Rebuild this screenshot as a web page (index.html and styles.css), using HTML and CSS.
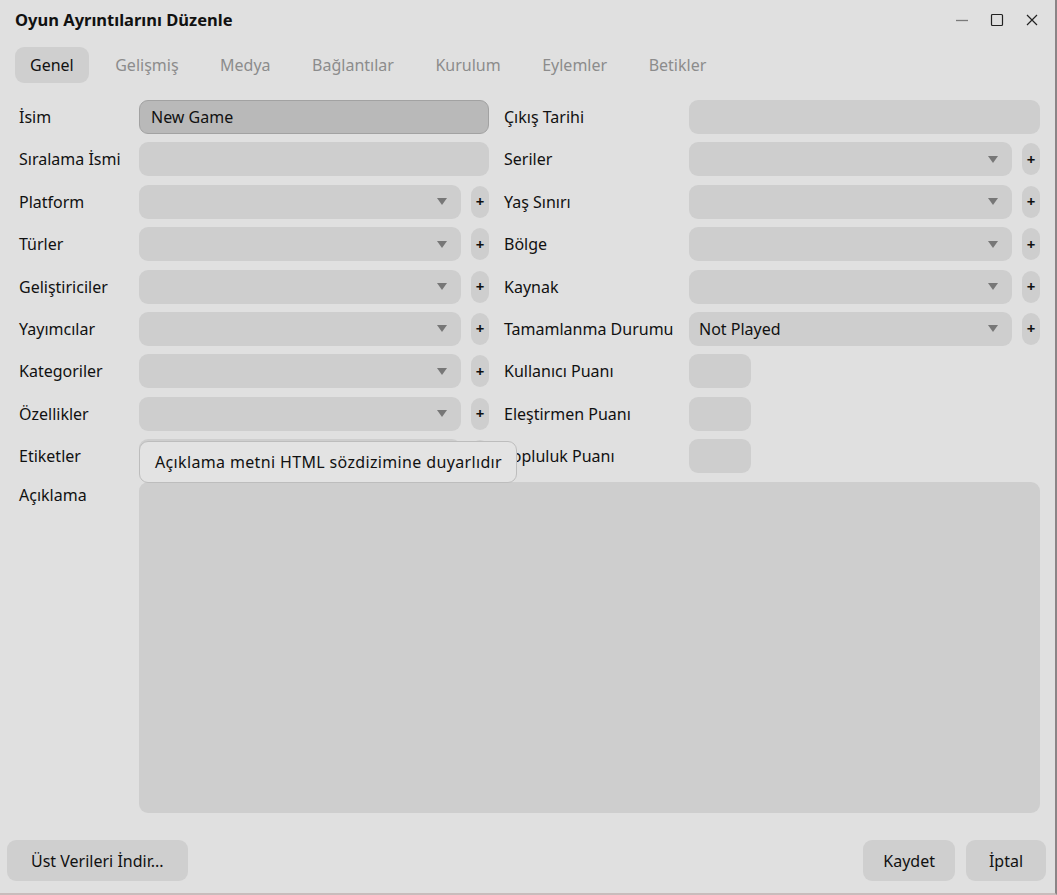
FILE: index.html
```html
<!DOCTYPE html>
<html lang="tr">
<head>
<meta charset="utf-8">
<title>Oyun Ayrıntılarını Düzenle</title>
<link rel="stylesheet" href="styles.css">
</head>
<body>
<div class="window">
  <header class="titlebar">
    <div class="title">Oyun Ayrıntılarını Düzenle</div>
    <div class="controls">
      <svg class="ctl" width="14" height="14" viewBox="0 0 14 14"><line x1="1" y1="7.5" x2="13" y2="7.5" stroke="#7a7a7a" stroke-width="1.3"/></svg>
      <svg class="ctl" width="14" height="14" viewBox="0 0 14 14"><rect x="1.5" y="1.5" width="11" height="11" rx="1" fill="none" stroke="#222" stroke-width="1.2"/></svg>
      <svg class="ctl" width="14" height="14" viewBox="0 0 14 14"><path d="M2 2 L12 12 M12 2 L2 12" stroke="#222" stroke-width="1.2"/></svg>
    </div>
  </header>

  <nav class="tabs">
    <span class="tab active">Genel</span>
    <span class="tab">Gelişmiş</span>
    <span class="tab">Medya</span>
    <span class="tab">Bağlantılar</span>
    <span class="tab">Kurulum</span>
    <span class="tab">Eylemler</span>
    <span class="tab">Betikler</span>
  </nav>

  <main class="form">
    <label class="lbl">İsim</label>
    <div class="field focused">New Game</div>
    <label class="lbl r">Çıkış Tarihi</label>
    <div class="field"></div>

    <label class="lbl">Sıralama İsmi</label>
    <div class="field"></div>
    <label class="lbl r">Seriler</label>
    <div class="combo-row"><div class="field combo"><span class="arrow"></span></div><span class="plus">+</span></div>

    <label class="lbl">Platform</label>
    <div class="combo-row"><div class="field combo"><span class="arrow"></span></div><span class="plus">+</span></div>
    <label class="lbl r">Yaş Sınırı</label>
    <div class="combo-row"><div class="field combo"><span class="arrow"></span></div><span class="plus">+</span></div>

    <label class="lbl">Türler</label>
    <div class="combo-row"><div class="field combo"><span class="arrow"></span></div><span class="plus">+</span></div>
    <label class="lbl r">Bölge</label>
    <div class="combo-row"><div class="field combo"><span class="arrow"></span></div><span class="plus">+</span></div>

    <label class="lbl">Geliştiriciler</label>
    <div class="combo-row"><div class="field combo"><span class="arrow"></span></div><span class="plus">+</span></div>
    <label class="lbl r">Kaynak</label>
    <div class="combo-row"><div class="field combo"><span class="arrow"></span></div><span class="plus">+</span></div>

    <label class="lbl">Yayımcılar</label>
    <div class="combo-row"><div class="field combo"><span class="arrow"></span></div><span class="plus">+</span></div>
    <label class="lbl r">Tamamlanma Durumu</label>
    <div class="combo-row"><div class="field combo">Not Played<span class="arrow"></span></div><span class="plus">+</span></div>

    <label class="lbl">Kategoriler</label>
    <div class="combo-row"><div class="field combo"><span class="arrow"></span></div><span class="plus">+</span></div>
    <label class="lbl r">Kullanıcı Puanı</label>
    <div class="field small"></div>

    <label class="lbl">Özellikler</label>
    <div class="combo-row"><div class="field combo"><span class="arrow"></span></div><span class="plus">+</span></div>
    <label class="lbl r">Eleştirmen Puanı</label>
    <div class="field small"></div>

    <label class="lbl">Etiketler</label>
    <div class="combo-row tip-anchor"><div class="field combo"><span class="arrow"></span></div><span class="plus">+</span>
      <div class="tooltip">Açıklama metni HTML sözdizimine duyarlıdır</div>
    </div>
    <label class="lbl r">Topluluk Puanı</label>
    <div class="field small"></div>

    <label class="lbl top">Açıklama</label>
    <div class="field textarea"></div>
  </main>

  <footer class="footer">
    <button class="btn wide">Üst Verileri İndir...</button>
    <div class="right-btns">
      <button class="btn">Kaydet</button>
      <button class="btn">İptal</button>
    </div>
  </footer>
</div>
</body>
</html>
```

FILE: styles.css
```css
* { box-sizing: border-box; }
html, body { margin: 0; padding: 0; }
body {
  width: 1057px;
  height: 895px;
  background: #e0e0e0;
  font-family: "Noto Sans", "DejaVu Sans", sans-serif;
  font-size: 16px;
  color: #111;
  overflow: hidden;
}
.window {
  width: 1057px;
  height: 895px;
  display: flex;
  flex-direction: column;
  border-right: 2px solid #8a8486;
  border-bottom: 2px solid #c8bcbc;
}
.titlebar {
  height: 39px;
  flex: none;
  display: flex;
  align-items: center;
  justify-content: space-between;
  padding: 0 16px 0 15px;
}
.title {
  font-weight: bold;
  font-size: 16.5px;
}
.controls { display: flex; gap: 21px; align-items: center; }
.ctl { display: block; }

.tabs {
  display: flex;
  gap: 11.5px;
  padding: 8px 0 0 15px;
  flex: none;
}
.tab {
  height: 36px;
  line-height: 36px;
  padding: 0 15px;
  border-radius: 9px;
  color: #8c8c8c;
}
.tab.active {
  background: #cfcfcf;
  color: #111;
}

.form {
  display: grid;
  grid-template-columns: 120px 350px 200px 351px;
  grid-template-rows: repeat(9, 34px) 331px;
  row-gap: 8.4px;
  padding: 17px 0 0 19px;
  flex: none;
}
.lbl {
  display: flex;
  align-items: center;
  white-space: nowrap;
}
.lbl.r { padding-left: 15px; }
.lbl.top { align-items: flex-start; padding-top: 2px; }
.field {
  background: #cecece;
  border-radius: 9px;
  height: 34px;
  display: flex;
  align-items: center;
  padding: 0 10px;
}
.field.focused {
  background: #b9b9b9;
  border: 1px solid #a2a2a2;
  padding-left: 11px;
}
.field.small { width: 62px; }
.combo-row {
  display: flex;
  align-items: center;
  gap: 10px;
  position: relative;
}
.combo { flex: 1; }
.arrow {
  margin-left: auto;
  margin-right: 4px;
  width: 0; height: 0;
  border-left: 5px solid transparent;
  border-right: 5px solid transparent;
  border-top: 7px solid #777;
}
.plus {
  width: 18px;
  height: 32px;
  border-radius: 9px;
  background: #cecece;
  display: flex;
  align-items: center;
  justify-content: center;
  font-weight: bold;
  font-size: 15px;
  padding-bottom: 1px;
}
.textarea {
  grid-column: 2 / 5;
  height: 331px;
}

.tooltip {
  position: absolute;
  left: 0;
  top: 2px;
  width: 378px;
  height: 42px;
  background: #e3e3e3;
  border: 1px solid #bdbdbd;
  border-radius: 9px;
  display: flex;
  align-items: center;
  padding-left: 15px;
  letter-spacing: 0.35px;
  z-index: 5;
  white-space: nowrap;
}

.footer {
  margin-top: auto;
  display: flex;
  justify-content: space-between;
  align-items: center;
  padding: 0 9px 12px 7px;
}
.right-btns { display: flex; gap: 11px; }
.btn {
  font-family: inherit;
  font-size: 16px;
  color: #111;
  background: #cfcfcf;
  border: none;
  border-radius: 9px;
  height: 41px;
  min-width: 80px;
  padding: 0 20px;
}
.btn.wide { padding: 0 24px; }
```
